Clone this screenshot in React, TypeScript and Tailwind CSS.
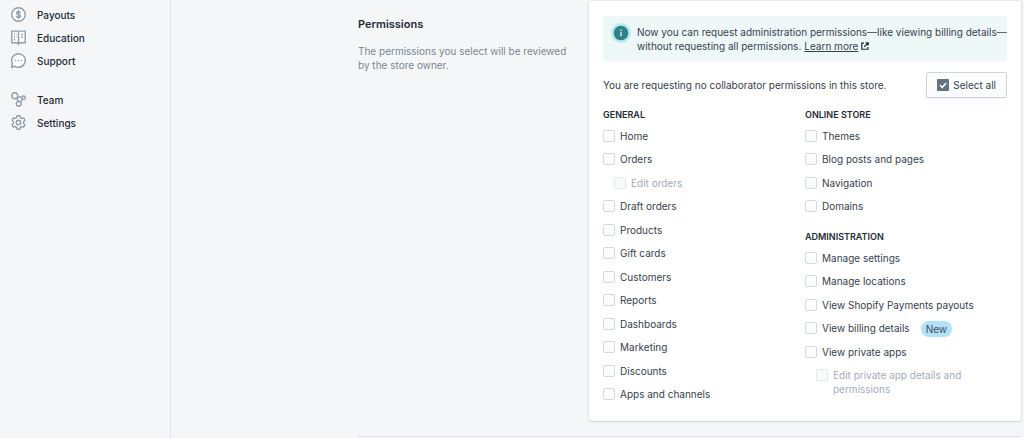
import React from 'react';

type Permission = {
  label: string;
  disabled?: boolean;
  isNew?: boolean;
};

const general: Permission[] = [
  { label: 'Home' },
  { label: 'Orders' },
  { label: 'Edit orders', disabled: true },
  { label: 'Draft orders' },
  { label: 'Products' },
  { label: 'Gift cards' },
  { label: 'Customers' },
  { label: 'Reports' },
  { label: 'Dashboards' },
  { label: 'Marketing' },
  { label: 'Discounts' },
  { label: 'Apps and channels' },
];

const onlineStore: Permission[] = [
  { label: 'Themes' },
  { label: 'Blog posts and pages' },
  { label: 'Navigation' },
  { label: 'Domains' },
];

const administration: Permission[] = [
  { label: 'Manage settings' },
  { label: 'Manage locations' },
  { label: 'View Shopify Payments payouts' },
  { label: 'View billing details', isNew: true },
  { label: 'View private apps' },
  { label: 'Edit private app details and permissions', disabled: true },
];

function NavIcon({ children }: { children: React.ReactNode }) {
  return (
    <svg
      viewBox="0 0 20 20"
      className="size-[15px] shrink-0 text-[#919eab]"
      fill="none"
      stroke="currentColor"
      strokeWidth="1.9"
      strokeLinejoin="round"
      aria-hidden="true"
    >
      {children}
    </svg>
  );
}

const payoutsIcon = (
  <NavIcon>
    <circle cx="10" cy="10" r="9" fill="#fff" />
    <path d="M12.6 7.6C12.2 6.7 11.2 6.2 10 6.2c-1.5 0-2.6.7-2.6 1.8 0 2.6 5.3 1.3 5.3 4 0 1.100-1.200 1.800-2.700 1.800-1.300 0-2.300-.5-2.800-1.500M10 4.500v11" strokeLinecap="round" />
  </NavIcon>
);

const educationIcon = (
  <NavIcon>
    <path d="M1 1.500h7.500c.9 0 1.500.6 1.500 1.300 0-.7.600-1.300 1.500-1.300H19v15.500h-7.500c-.9 0-1.500.5-1.500 1.300 0-.8-.6-1.300-1.500-1.300H1z" fill="#fff" />
    <path d="M10 3v17" />
    <path d="M4 6h1.600M4 9.500h1.600M4 13h1.600M13.500 6h2.500M13.500 9.500h2.500M7.200 6h.6M7.200 9.500h.6" />
  </NavIcon>
);

const supportIcon = (
  <NavIcon>
    <path d="M10 1a9 9 0 1 1-4.600 16.700L1 19l.9-5A9 9 0 0 1 10 1z" fill="#fff" />
    <path d="M6 10h.1M10 10h.1M14 10h.1" strokeLinecap="round" strokeWidth="2" />
  </NavIcon>
);

const teamIcon = (
  <NavIcon>
    <path d="M7.500 7.800l2 5M12.800 13.600l2.700-4.300M8.500 6.500l6 .5" />
    <circle cx="5" cy="5" r="3.900" fill="#fff" />
    <circle cx="16.800" cy="7.500" r="2.200" fill="#fff" />
    <circle cx="10.300" cy="15.800" r="3.200" fill="#fff" />
  </NavIcon>
);

const settingsIcon = (
  <NavIcon>
    <path
      d="M8.200 1h3.600l.6 2.600 1.900 1.100 2.500-.8 1.800 3.100-1.900 1.900v2.200l1.900 1.900-1.800 3.100-2.500-.8-1.900 1.100-.6 2.600H8.200l-.6-2.600-1.900-1.100-2.500.8L1.400 13l1.900-1.900V8.900L1.400 7l1.800-3.100 2.500.8 1.900-1.100z"
      fill="#fff"
    />
    <circle cx="10" cy="10" r="3" />
  </NavIcon>
);

function NavLink({ icon, label }: { icon: React.ReactNode; label: string }) {
  return (
    <li>
      <a href="#" className="flex h-[23px] items-center gap-[11px] pl-[11px] font-medium text-[#212b36]">
        {icon}
        {label}
      </a>
    </li>
  );
}

function PermissionRow({ label, disabled, isNew }: Permission) {
  return (
    <li className={disabled ? 'flex items-start gap-[11px] pl-[11px]' : 'flex items-start gap-[11px]'}>
      <label
        className={
          disabled ? 'flex max-w-[160px] items-start gap-[5px] text-[#a3adb8]' : 'flex items-start gap-[5px]'
        }
      >
        <input
          type="checkbox"
          disabled={disabled}
          className="mt-px size-3 shrink-0 appearance-none rounded-[2px] border border-[#d3dae1] bg-linear-to-b from-white to-[#f9fafb] checked:bg-[#637381] disabled:border-[#e6eaee] disabled:from-[#f9fafb]"
        />
        <span>{label}</span>
      </label>
      {isNew && (
        <span className="-mb-0.5 h-4 rounded-full bg-[#b4e1fa] px-[5px] leading-4 text-[#3e4e5a]">New</span>
      )}
    </li>
  );
}

function PermissionGroup({ title, items, size }: { title: string; items: Permission[]; size: string }) {
  return (
    <section>
      <h3 className="mb-2 text-[9px] leading-3 font-semibold text-[#212b36]">{title}</h3>
      <ul className={`flex flex-col justify-between ${size}`}>
        {items.map((item) => (
          <PermissionRow key={item.label} {...item} />
        ))}
      </ul>
    </section>
  );
}

export default function App() {
  return (
    <div className="flex min-h-screen bg-[#f4f6f8] font-['Inter','Liberation_Sans',sans-serif] text-[10px] leading-[14px] text-[#36414c]">
      <nav className="w-[171px] shrink-0 border-r border-[#e3e7eb] pt-[3px]" aria-label="Main">
        <ul>
          <NavLink icon={payoutsIcon} label="Payouts" />
          <NavLink icon={educationIcon} label="Education" />
          <NavLink icon={supportIcon} label="Support" />
        </ul>
        <ul className="mt-4">
          <NavLink icon={teamIcon} label="Team" />
          <NavLink icon={settingsIcon} label="Settings" />
        </ul>
      </nav>

      <main className="min-w-0 flex-1 pt-px pr-[3px] pl-[187px]">
        <div className="flex border-b border-[#dfe3e8] pb-[15px]">
          <header className="w-[231px] shrink-0 pt-4 pr-[22px]">
            <h2 className="text-[11px] font-semibold text-[#212b36]">Permissions</h2>
            <p className="mt-[13px] text-[#7b8794]">
              The permissions you select will be reviewed by the store owner.
            </p>
          </header>

          <div className="min-w-0 flex-1 rounded-[2px] bg-white px-[14px] pt-[15px] pb-5 shadow-[0_0_0_1px_rgba(63,63,68,0.06),0_1px_2px_0_rgba(63,63,68,0.15)]">
            <div className="flex gap-[6px] rounded-[2px] bg-[#eef8f9] py-2 pl-2">
              <svg viewBox="0 0 20 20" className="-mt-px size-5 shrink-0" aria-hidden="true">
                <circle cx="10" cy="10" r="10" fill="#b7ecec" />
                <circle cx="10" cy="10" r="7.300" fill="#31808a" />
                <path d="M10 9v4.300M10 6.500v1.400" stroke="#c9eeee" strokeWidth="1.400" />
              </svg>
              <div className="pt-px">
                <p className="whitespace-nowrap">
                  Now you can request administration permissions—like viewing billing details—
                </p>
                <p className="flex items-center gap-[3px]">
                  without requesting all permissions.
                  <a href="#" className="flex items-center gap-[3px]">
                    <span className="underline">Learn more</span>
                    <svg
                      viewBox="0 0 16 16"
                      className="size-2"
                      fill="none"
                      stroke="#212b36"
                      strokeWidth="2.400"
                      aria-hidden="true"
                    >
                      <path d="M6 2.200H1.500v12.300h12.300V10M9 1.500h5.500V7M14 2L6.500 9.500" />
                    </svg>
                  </a>
                </p>
              </div>
            </div>

            <div className="mt-[11px] flex items-center justify-between">
              <p>You are requesting no collaborator permissions in this store.</p>
              <button
                type="button"
                className="flex h-[26px] items-center gap-1 rounded-[2px] border border-[#cfd6dd] bg-linear-to-b from-white to-[#f9fafb] px-[10px] shadow-[0_1px_0_rgba(22,29,37,0.05)]"
              >
                <svg viewBox="0 0 12 12" className="size-3" aria-hidden="true">
                  <rect width="12" height="12" rx="1" fill="#637381" />
                  <path d="M3 6.200l2.200 2.100L9.200 4" fill="none" stroke="#fff" strokeWidth="1.600" />
                </svg>
                Select all
              </button>
            </div>

            <div className="mt-[11px] grid grid-cols-2">
              <PermissionGroup title="GENERAL" items={general} size="min-h-[272px]" />
              <div className="flex flex-col gap-[18px]">
                <PermissionGroup title="ONLINE STORE" items={onlineStore} size="min-h-[84px]" />
                <PermissionGroup title="ADMINISTRATION" items={administration} size="min-h-[145px]" />
              </div>
            </div>
          </div>
        </div>
      </main>
    </div>
  );
}
